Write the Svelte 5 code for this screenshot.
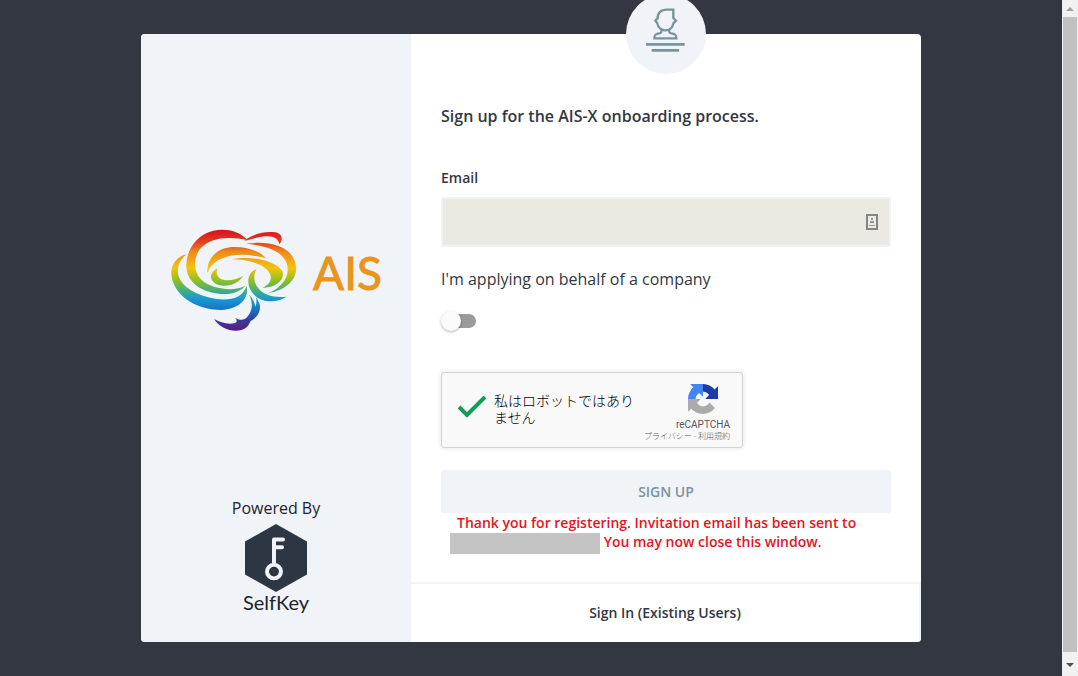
<script>
	let email = '';
	let company = false;
	let human = true;
</script>

<div class="page">
	<main>
		<div class="card">
			<aside>
				<svg class="ais" viewBox="0 0 210 104" role="img" aria-label="AIS">
					<defs>
						<linearGradient id="rainbow" gradientUnits="userSpaceOnUse" x1="0" y1="45" x2="0" y2="345">
							<stop offset="0" stop-color="#d9101f" />
							<stop offset="0.12" stop-color="#e3401c" />
							<stop offset="0.22" stop-color="#ee8a1a" />
							<stop offset="0.38" stop-color="#f5c30b" />
							<stop offset="0.5" stop-color="#93c01f" />
							<stop offset="0.6" stop-color="#45b07a" />
							<stop offset="0.7" stop-color="#1496d8" />
							<stop offset="0.8" stop-color="#1a72bd" />
							<stop offset="0.9" stop-color="#393c9b" />
							<stop offset="1" stop-color="#5c1a83" />
						</linearGradient>
					</defs>
					<g transform="translate(-11 -14) scale(0.3333)" fill="url(#rainbow)">
						<path d="M264 76C235 45 195 40 160 47C110 58 78 105 79 155C82 215 150 242 210 236C232 232 248 222 256 212C225 230 160 225 125 195C100 170 98 130 122 100C150 68 205 62 264 76Z" />
						<path d="M252 78C275 60 310 48 345 52C365 55 372 72 358 88C355 70 340 62 315 64C295 66 275 72 252 78Z" />
						<path d="M80 118C50 125 32 150 34 178C38 235 100 285 185 285C235 282 268 255 260 212C250 245 215 258 170 252C110 243 60 215 54 175C52 150 62 132 80 118Z" />
						<path d="M142 175C140 130 170 100 215 96C260 94 300 108 318 130C280 120 240 115 200 125C165 135 148 155 142 175Z" />
						<path d="M215 133C270 122 340 135 365 165C380 190 350 220 308 218C335 205 340 185 322 165C300 143 260 134 215 133Z" />
						<path d="M258 86C320 78 375 90 398 125C425 170 400 220 325 235C370 215 392 180 380 145C365 105 315 92 258 86Z" />
						<path d="M290 162C262 172 258 205 275 230C295 262 345 268 380 245C345 250 310 240 295 220C280 200 280 180 290 162Z" />
						<path d="M172 160C145 175 148 200 175 210C205 218 235 205 250 183C225 195 200 200 183 192C170 185 168 172 172 160Z" />
						<path d="M268 240C278 262 280 285 262 305C255 315 240 318 225 308C232 316 232 322 225 324C205 330 180 322 162 312C180 340 215 352 245 345C265 338 268 325 272 318C295 305 305 285 298 265C294 255 290 250 288 246C290 258 290 268 286 275C284 262 278 250 268 240Z" />
					</g>
					<text x="142" y="61">AIS</text>
				</svg>
				<div class="powered">
					<span>Powered By</span>
					<svg width="62" height="68" viewBox="0 0 62 70" preserveAspectRatio="none" aria-hidden="true">
						<path d="M31 0L62 18V52L31 70L0 52V18Z" fill="#2d3744" />
						<g fill="none" stroke="#f0f4f9" stroke-width="4" stroke-linecap="round" stroke-linejoin="round">
							<path d="M29 40V16H38M29 24H37" />
							<circle cx="29" cy="49" r="7" />
						</g>
					</svg>
					<strong>SelfKey</strong>
				</div>
			</aside>

			<section>
				<div class="badge">
					<svg width="40" height="44" viewBox="0 0 120 132" aria-hidden="true">
						<g fill="none" stroke="#7b939c" stroke-width="7">
							<path d="M82 5H62C44 5 34 16 35 31L28 38L34 46C36 58 46 67 58 67C72 67 80 58 82 46L90 38L82 30Z" />
							<path d="M46 66C48 74 44 76 36 77C27 79 25 82 25 91H91C91 82 89 79 80 77C72 76 68 74 70 66" />
							<path d="M0 109H116M17 127H99" stroke-width="8" />
						</g>
					</svg>
				</div>

				<form on:submit|preventDefault>
					<h1>Sign up for the AIS-X onboarding process.</h1>

					<label class="email" for="email">Email</label>
					<div class="field">
						<input id="email" type="email" bind:value={email} />
						<svg width="12" height="16" viewBox="0 0 12 16" aria-hidden="true">
							<path d="M1 1H11V15H1Z" fill="#ededE7" stroke="#858583" stroke-width="2" />
							<path d="M5 4H7V6H5ZM4 7H8V9H4ZM3 11H9V12H3Z" fill="#979795" />
						</svg>
					</div>

					<label class="company" for="company">I'm applying on behalf of a company</label>
					<input id="company" class="toggle" type="checkbox" bind:checked={company} />

					<div class="captcha">
						<input id="human" type="checkbox" bind:checked={human} />
						<label for="human">
							<svg width="28" height="22" viewBox="0 0 28 22" aria-hidden="true">
								<path d="M1 11L9 19L27 1" fill="none" stroke="#0f9d58" stroke-width="4" />
							</svg>
							<span>私はロボットではありません</span>
						</label>
						<div class="brand">
							<svg width="30" height="30" viewBox="0 0 64 64" aria-hidden="true">
								<path fill="#1c3aa9" d="M64 31.955l-.033-1.37V4.687l-7.16 7.16C50.948 4.674 42.033.093 32.05.093c-10.4 0-19.622 4.96-25.458 12.64l11.736 11.86a15.55 15.55 0 0 1 4.754-5.334c2.05-1.6 4.952-2.906 8.968-2.906.485 0 .86.057 1.135.163 4.976.393 9.288 3.14 11.828 7.124l-8.307 8.307L64 31.953" />
								<path fill="#4285f4" d="M31.862.094l-1.37.033H4.594l7.16 7.16C4.58 13.147 0 22.06 0 32.046c0 10.4 4.96 19.622 12.64 25.458L24.5 45.768a15.55 15.55 0 0 1-5.334-4.754c-1.6-2.05-2.906-4.952-2.906-8.968 0-.485.057-.86.163-1.135.393-4.976 3.14-9.288 7.124-11.828l8.307 8.307L31.86.095" />
								<path fill="#ababab" d="M.001 32.045l.033 1.37v25.898l7.16-7.16c5.86 7.173 14.774 11.754 24.76 11.754 10.4 0 19.622-4.96 25.458-12.64l-11.736-11.86a15.55 15.55 0 0 1-4.754 5.334c-2.05 1.6-4.952 2.906-8.968 2.906-.485 0-.86-.057-1.135-.163-4.976-.393-9.288-3.14-11.828-7.124l8.307-8.307c-10.522.04-22.4.066-27.295-.005" />
							</svg>
							<span>reCAPTCHA</span>
							<small><a href="#privacy">プライバシー</a> - <a href="#terms">利用規約</a></small>
						</div>
					</div>

					<button type="submit">SIGN UP</button>
					<p>
						Thank you for registering. Invitation email has been sent to
						<span class="hidden"></span> You may now close this window.
					</p>
				</form>

				<footer><a href="#signin">Sign In (Existing Users)</a></footer>
			</section>
		</div>
	</main>

	<div class="scrollbar" aria-hidden="true">
		<svg width="8" height="4" viewBox="0 0 8 4"><path d="M0 4L4 0L8 4Z" fill="#a3a3a3" /></svg>
		<div class="thumb"></div>
		<svg width="8" height="4" viewBox="0 0 8 4"><path d="M0 0L4 4L8 0Z" fill="#505050" /></svg>
	</div>
</div>

<style>
	:global(body) {
		margin: 0;
	}

	.page {
		display: flex;
		min-height: 100vh;
		background: #333742;
		color: #333742;
		font-family: 'Open Sans', 'Noto Sans CJK JP', sans-serif;
		font-size: 14px;
	}

	main {
		flex: 1;
		padding: 34px 20px;
	}

	.card {
		display: flex;
		max-width: 780px;
		margin: 0 auto;
		background: #fff;
		border-radius: 4px;
	}

	aside {
		flex: 0 0 270px;
		box-sizing: border-box;
		display: flex;
		flex-direction: column;
		justify-content: space-between;
		padding: 195px 30px 30px;
		background: #f0f4f9;
		border-radius: 4px 0 0 4px;
	}

	.ais text {
		fill: #e8951c;
		stroke: #e8951c;
		stroke-width: 1;
		font-family: Lato, sans-serif;
		font-size: 46px;
	}

	.powered {
		display: flex;
		flex-direction: column;
		align-items: center;
		color: #1f2329;
		font-size: 16px;
		line-height: 24px;
	}

	.powered svg {
		margin-top: 4px;
	}

	.powered strong {
		font-family: Lato, sans-serif;
		font-size: 20px;
		font-weight: 400;
		line-height: 20px;
	}

	section {
		position: relative;
		flex: 1;
		min-width: 0;
	}

	.badge {
		position: absolute;
		top: -40px;
		left: 50%;
		display: flex;
		align-items: center;
		justify-content: center;
		width: 80px;
		height: 80px;
		margin-left: -40px;
		padding-bottom: 8px;
		box-sizing: border-box;
		border-radius: 50%;
		background: #f0f4f9;
	}

	form {
		display: flex;
		flex-direction: column;
		padding: 70px 30px 29px;
	}

	h1 {
		margin: 0 0 40px;
		font-size: 16px;
		font-weight: 600;
		line-height: 24px;
	}

	.email {
		font-weight: 600;
		line-height: 20px;
	}

	.field {
		display: flex;
		align-items: center;
		height: 50px;
		box-sizing: border-box;
		margin: 9px 0 20px;
		padding-right: 11px;
		border: 2px solid #f0f3f5;
		border-radius: 3px;
		background: #eaeae2;
	}

	.field input {
		flex: 1;
		min-width: 0;
		height: 100%;
		box-sizing: border-box;
		padding: 0 12px;
		border: 0;
		outline: 0;
		background: none;
		font: inherit;
	}

	.company {
		font-size: 16px;
		line-height: 24px;
	}

	.toggle {
		position: relative;
		width: 34px;
		height: 14px;
		margin: 23px 0 44px 1px;
		appearance: none;
		border-radius: 7px;
		background: #9b9b9b;
	}

	.toggle::before {
		content: '';
		position: absolute;
		top: -3px;
		left: -1px;
		width: 20px;
		height: 20px;
		border-radius: 50%;
		background: #fafafa;
		box-shadow: 0 1px 3px rgba(0, 0, 0, 0.3);
		transition: left 0.1s;
	}

	.toggle:checked::before {
		left: 15px;
	}

	.captcha {
		display: flex;
		justify-content: space-between;
		width: 302px;
		height: 76px;
		box-sizing: border-box;
		padding: 0 12px 0 16px;
		border: 1px solid #d3d3d3;
		border-radius: 3px;
		background: #f9f9f9;
		box-shadow: 0 0 4px 1px rgba(0, 0, 0, 0.08);
	}

	.captcha input {
		position: absolute;
		width: 28px;
		height: 28px;
		margin: 20px 0;
		opacity: 0;
	}

	.captcha label {
		display: flex;
		align-items: center;
		gap: 8px;
		width: 180px;
		color: #000;
		font-family: Roboto, 'Noto Sans CJK JP', sans-serif;
		font-weight: 300;
		line-height: 17px;
	}

	.captcha label svg {
		flex: none;
		margin-top: -6px;
	}

	.captcha input:not(:checked) + label path {
		stroke: #c1c1c1;
	}

	.brand {
		display: flex;
		flex-direction: column;
		align-items: flex-end;
		padding-top: 11px;
		color: #555;
		font-family: Roboto, 'Noto Sans CJK JP', sans-serif;
		font-size: 10px;
		line-height: 12px;
		white-space: nowrap;
	}

	.brand svg {
		margin: 0 12px 5px 0;
	}

	.brand small {
		font-size: 8px;
		font-weight: 300;
	}

	a {
		color: inherit;
		text-decoration: none;
	}

	button {
		height: 43px;
		margin-top: 22px;
		border: 0;
		border-radius: 3px;
		background: #f0f4f9;
		color: #7b939c;
		font: inherit;
		font-weight: 600;
	}

	p {
		margin: 0;
		padding: 0 30px 0 9px;
		color: #e3151f;
		font-weight: 600;
		line-height: 19px;
		text-indent: 7px;
	}

	.hidden {
		display: inline-block;
		width: 150px;
		height: 21px;
		margin: -1px 0;
		background: #c4c4c4;
		vertical-align: middle;
	}

	footer {
		padding: 19px 0;
		border-top: 2px solid #f2f4f6;
		border-right: 2px solid #f0f4f9;
		border-radius: 0 0 4px 0;
		font-weight: 600;
		line-height: 20px;
		text-align: center;
	}

	.scrollbar {
		display: flex;
		flex-direction: column;
		align-items: center;
		gap: 6px;
		box-sizing: border-box;
		width: 16px;
		padding: 7px 1px 9px;
		background: #f1f1f1;
	}

	.thumb {
		flex: 1;
		align-self: stretch;
		margin-bottom: 5px;
		background: #c1c1c1;
	}
</style>
